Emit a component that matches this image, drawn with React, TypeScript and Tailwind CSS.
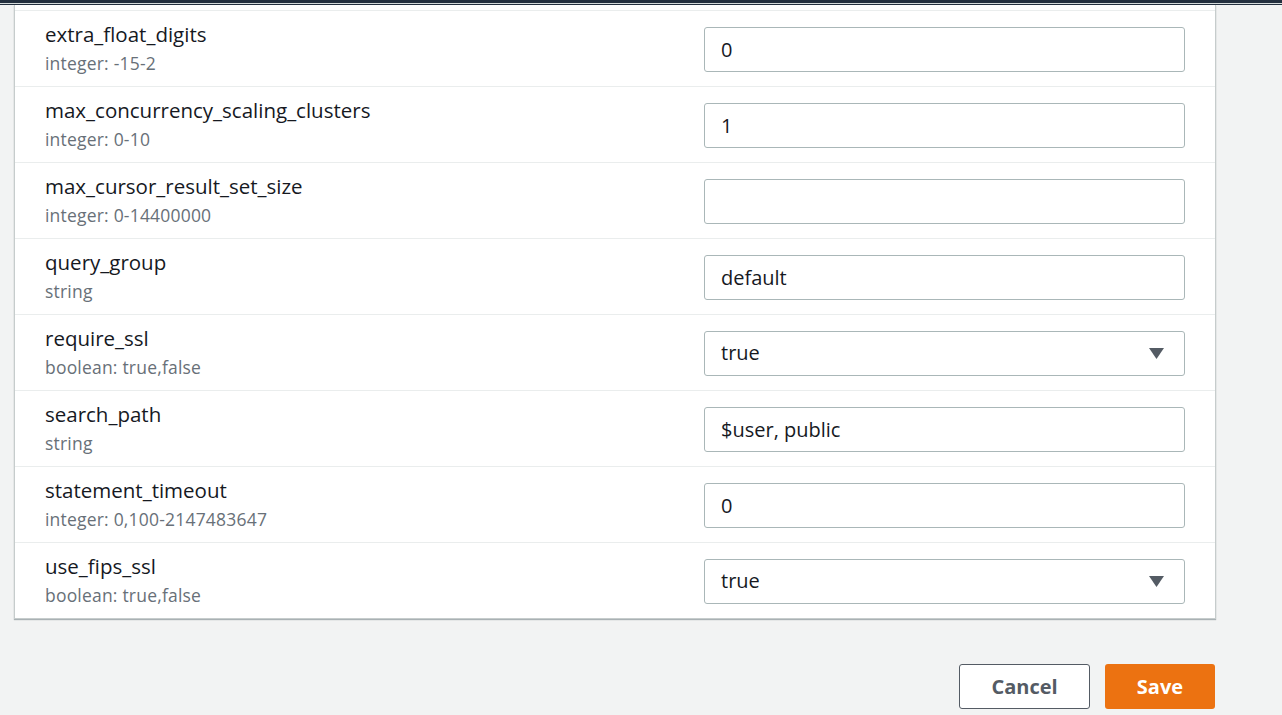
import React from 'react';

type Param = {
  name: string;
  hint: string;
  value: string;
  select?: boolean;
};

const params: Param[] = [
  { name: 'extra_float_digits', hint: 'integer: -15-2', value: '0' },
  { name: 'max_concurrency_scaling_clusters', hint: 'integer: 0-10', value: '1' },
  { name: 'max_cursor_result_set_size', hint: 'integer: 0-14400000', value: '' },
  { name: 'query_group', hint: 'string', value: 'default' },
  { name: 'require_ssl', hint: 'boolean: true,false', value: 'true', select: true },
  { name: 'search_path', hint: 'string', value: '$user, public' },
  { name: 'statement_timeout', hint: 'integer: 0,100-2147483647', value: '0' },
  { name: 'use_fips_ssl', hint: 'boolean: true,false', value: 'true', select: true },
];

const Caret = () => (
  <svg width="15" height="11" viewBox="0 0 15 11" className="shrink-0">
    <path d="M0 0 H15 L7.5 11 Z" fill="#545b64" />
  </svg>
);

const ParamRow = ({ param }: { param: Param }) => (
  <div className="flex items-start border-t border-[#eaeded] px-[30px] h-[76px]">
    <div className="flex-1 pt-[12px]">
      <div className="text-[20.5px] leading-[22px] text-[#16191f]">{param.name}</div>
      <div className="mt-[8px] text-[17.5px] leading-[20px] tracking-[0.2px] text-[#687078]">{param.hint}</div>
    </div>
    {param.select ? (
      <div className="mt-[16px] w-[481px] h-[45px] flex items-center justify-between border border-[#aab7b8] rounded-[3px] pl-[16px] pr-[20px] pb-[1px] text-[20px] text-[#16191f]">
        <span>{param.value}</span>
        <Caret />
      </div>
    ) : (
      <input
        defaultValue={param.value}
        className="mt-[16px] w-[481px] h-[45px] border border-[#aab7b8] rounded-[3px] px-[16px] pb-[1px] text-[20px] text-[#16191f] outline-none bg-white"
      />
    )}
  </div>
);

export default function App() {
  return (
    <div className="min-h-screen bg-[#f2f3f3]" style={{ fontFamily: '"Open Sans", Arial, sans-serif' }}>
      <div className="h-[3px] bg-[#232f3e]" />
      <div className="h-[1px] bg-[#d5dbdb]" />
      <div className="h-[1px] bg-[#232f3e]" />
      <div className="ml-[14px] w-[1202px] bg-white border-l border-r border-b border-[#c6cccc] shadow-[0_1px_1px_rgba(0,28,36,0.3)] pt-[5px]">
        {params.map((p) => (
          <ParamRow key={p.name} param={p} />
        ))}
      </div>
      <div className="flex justify-end gap-[15px] pr-[67px] mt-[45px]">
        <button className="w-[131px] h-[45px] border border-[#545b64] rounded-[3px] bg-white text-[20px] font-bold text-[#545b64]">
          Cancel
        </button>
        <button className="w-[110px] h-[45px] rounded-[3px] bg-[#ec7211] text-[20px] font-bold text-white">
          Save
        </button>
      </div>
    </div>
  );
}
